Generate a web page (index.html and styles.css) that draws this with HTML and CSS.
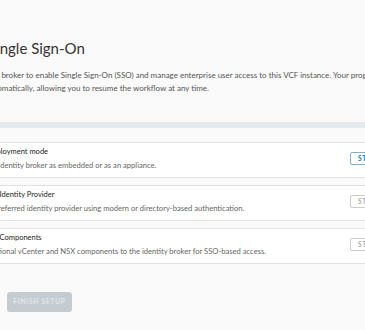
FILE: index.html
```html
<!DOCTYPE html>
<html lang="en">
<head>
    <meta charset="UTF-8">
    <meta name="viewport" content="width=device-width, initial-scale=1.0">
    <title>Single Sign-On</title>
    <link rel="stylesheet" href="styles.css">
</head>
<body>

    <main class="page">
        <h1 class="page-title">Single Sign-On</h1>
        <p class="intro">
            The broker to enable Single Sign-On (SSO) and manage enterprise user access to this VCF instance. Your progress is saved<br>
            automatically, allowing you to resume the workflow at any time.
        </p>

        <div class="divider"></div>

        <ul class="steps">
            <li class="step">
                <div class="step-text">
                    <h3>Deployment mode</h3>
                    <p>An identity broker as embedded or as an appliance.</p>
                </div>
                <button class="btn-start active">START</button>
            </li>
            <li class="step">
                <div class="step-text">
                    <h3>Set Identity Provider</h3>
                    <p>A preferred identity provider using modern or directory-based authentication.</p>
                </div>
                <button class="btn-start" disabled>START</button>
            </li>
            <li class="step">
                <div class="step-text">
                    <h3>Set Components</h3>
                    <p>Optional vCenter and NSX components to the identity broker for SSO-based access.</p>
                </div>
                <button class="btn-start" disabled>START</button>
            </li>
        </ul>

        <div class="footer">
            <button class="btn-finish" disabled>FINISH SETUP</button>
        </div>
    </main>

</body>
</html>
```
FILE: styles.css
```css
body {
    margin: 0;
    background-color: #fafafa;
    font-family: Lato, "Open Sans", sans-serif;
    overflow: hidden;
}
.page {
    width: 425px;
    margin-left: -25px;
    padding-top: 39px;
}
.page-title {
    margin: 0;
    padding-left: 13px;
    font-size: 15px;
    line-height: 18px;
    font-weight: 400;
    color: #333;
}
.intro {
    margin: 12px 0 0;
    padding-left: 11px;
    font-size: 8px;
    line-height: 13px;
    color: #555;
    white-space: nowrap;
}
.divider {
    height: 6px;
    margin-top: 27px;
    background-color: #e6eaed;
}
.steps {
    list-style: none;
    margin: 14px 0 0;
    padding: 0;
}
.step {
    display: flex;
    align-items: center;
    justify-content: space-between;
    margin-bottom: 7px;
    padding: 3px 9px 6px 11px;
    background-color: #fff;
    border: 1px solid #e2e2e2;
    border-radius: 2px;
}
.step-text {
    white-space: nowrap;
}
.step-text h3 {
    margin: 0;
    font-size: 7.5px;
    line-height: 12px;
    font-weight: 400;
    color: #222;
}
.step-text p {
    margin: 1px 0 0;
    font-size: 7.6px;
    line-height: 12px;
    color: #666;
}
.btn-start {
    width: 40px;
    height: 13px;
    padding: 0 0 0 7px;
    text-align: left;
    font-family: inherit;
    font-size: 6.5px;
    font-weight: 700;
    letter-spacing: 0.6px;
    background-color: #fff;
    border: 1px solid #ccc;
    border-radius: 2px;
    color: #aaa;
}
.btn-start.active {
    border-color: #7ab3d4;
    color: #0079b8;
}
.footer {
    padding: 17px 0 0 32px;
}
.btn-finish {
    width: 65px;
    height: 20px;
    padding: 0;
    font-family: inherit;
    font-size: 6.5px;
    font-weight: 700;
    letter-spacing: 0.8px;
    background-color: #c5ccd1;
    color: #e4e7ea;
    border: none;
    border-radius: 3px;
}
```
